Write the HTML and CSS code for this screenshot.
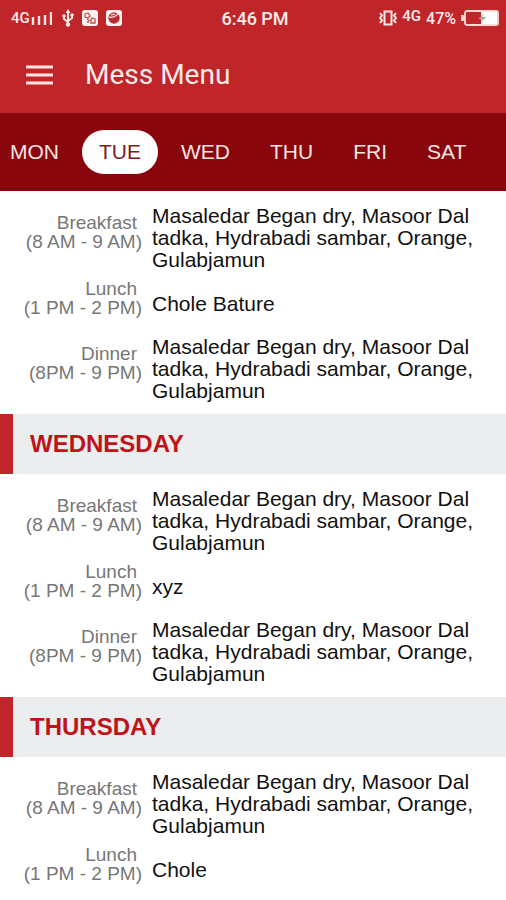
FILE: index.html
```html
<!DOCTYPE html>
<html lang="en">
<head>
<meta charset="utf-8">
<meta name="viewport" content="width=device-width, initial-scale=1">
<title>Mess Menu</title>
<link rel="stylesheet" href="styles.css">
</head>
<body>
<header class="top">
  <div class="status">
    <div class="status-left">
      <span class="carrier">4G</span>
      <svg class="signal" width="22" height="16" viewBox="0 0 22 16" aria-hidden="true"><path d="M3 7v8M9 6v9M15 5v10M21 2v13" stroke="#ffe3e0" stroke-width="2.4"/></svg>
      <svg class="usb" width="12" height="18" viewBox="0 0 12 18" aria-hidden="true"><path d="M6 2v14M2 7v3l4 3M10 6v3l-4 3" fill="none" stroke="#ffe9e6" stroke-width="2"/><path d="M6 0l2.5 4h-5z" fill="#ffe9e6"/><circle cx="2" cy="7" r="1.800" fill="#ffe9e6"/><circle cx="10" cy="6" r="1.800" fill="#ffe9e6"/><circle cx="6" cy="15.500" r="2.200" fill="#ffe9e6"/></svg>
      <svg class="app" width="16" height="16" viewBox="0 0 16 16" aria-hidden="true"><rect width="16" height="16" rx="3" fill="#fff3f1"/><path d="M3 4l3-1 2 3-2 2-3-1zM5 9l3 2M10 8l3 1v4H9v-3zM5 12h2" fill="none" stroke="#c5494b" stroke-width="1.3"/></svg>
      <svg class="app" width="16" height="16" viewBox="0 0 16 16" aria-hidden="true"><rect width="16" height="16" rx="3" fill="#fff3f1"/><circle cx="8" cy="8" r="5.700" fill="#b92c31"/><path d="M3 7c3 1 6 0 9-3M5 5l4-1" fill="none" stroke="#f5c5c2" stroke-width="1.6"/></svg>
    </div>
    <span class="clock">6:46 PM</span>
    <div class="status-right">
      <svg width="18" height="16" viewBox="0 0 18 16" aria-hidden="true"><path d="M5.500 1.500h7v13h-7zM1 3l2 2.500-2 2.500 2 2.500L1 13M17 3l-2 2.500 2 2.500-2 2.500 2 2.500" fill="none" stroke="#ffe9e6" stroke-width="2"/></svg>
      <span class="network">4G</span>
      <span class="percent">47%</span>
      <svg width="38" height="16" viewBox="0 0 38 16" aria-hidden="true"><rect x="4" y="1" width="33" height="14" rx="2" fill="none" stroke="#ffd9d6" stroke-width="1.8"/><path d="M20 2h16v12H20z" fill="#fff"/><path d="M0 5h4v6H0z" fill="#ffd9d6"/><path d="M23 4l-6 5h4l-1 3 5-5h-4z" fill="#a99a94"/></svg>
    </div>
  </div>
  <div class="appbar">
    <button class="menu" aria-label="Open menu"><svg width="27" height="20" viewBox="0 0 27 20" aria-hidden="true"><path d="M0 2h27M0 10h27M0 18h27" stroke="#ffe3e1" stroke-width="3"/></svg></button>
    <h1>Mess Menu</h1>
  </div>
</header>
<nav class="days" aria-label="Days">
  <button>MON</button>
  <button class="active" aria-current="true">TUE</button>
  <button>WED</button>
  <button>THU</button>
  <button>FRI</button>
  <button>SAT</button>
</nav>
<main>
  <section>
    <dl>
      <div class="meal"><dt><span>Breakfast</span>(8 AM - 9 AM)</dt><dd>Masaledar Began dry, Masoor Dal<br>tadka, Hydrabadi sambar, Orange,<br>Gulabjamun</dd></div>
      <div class="meal"><dt><span>Lunch</span>(1 PM - 2 PM)</dt><dd>Chole Bature</dd></div>
      <div class="meal"><dt><span>Dinner</span>(8PM - 9 PM)</dt><dd>Masaledar Began dry, Masoor Dal<br>tadka, Hydrabadi sambar, Orange,<br>Gulabjamun</dd></div>
    </dl>
  </section>
  <section>
    <h2>WEDNESDAY</h2>
    <dl>
      <div class="meal"><dt><span>Breakfast</span>(8 AM - 9 AM)</dt><dd>Masaledar Began dry, Masoor Dal<br>tadka, Hydrabadi sambar, Orange,<br>Gulabjamun</dd></div>
      <div class="meal"><dt><span>Lunch</span>(1 PM - 2 PM)</dt><dd>xyz</dd></div>
      <div class="meal"><dt><span>Dinner</span>(8PM - 9 PM)</dt><dd>Masaledar Began dry, Masoor Dal<br>tadka, Hydrabadi sambar, Orange,<br>Gulabjamun</dd></div>
    </dl>
  </section>
  <section>
    <h2>THURSDAY</h2>
    <dl>
      <div class="meal"><dt><span>Breakfast</span>(8 AM - 9 AM)</dt><dd>Masaledar Began dry, Masoor Dal<br>tadka, Hydrabadi sambar, Orange,<br>Gulabjamun</dd></div>
      <div class="meal"><dt><span>Lunch</span>(1 PM - 2 PM)</dt><dd>Chole</dd></div>
    </dl>
  </section>
</main>
</body>
</html>
```
FILE: styles.css
```css
* { box-sizing: border-box; }
body, h1, h2, dl, dd { margin: 0; }
body {
  background: #fff;
  color: #111;
  font-family: "Liberation Sans", Arial, sans-serif;
}
button {
  border: 0;
  padding: 0;
  background: none;
  color: inherit;
  font: inherit;
}
svg { display: block; flex: none; }
.top { background: #c02529; color: #ffebe9; }
.status {
  display: grid;
  grid-template-columns: 1fr auto 1fr;
  align-items: center;
  height: 36px;
  padding: 0 7px 0 11px;
  font-family: Roboto, sans-serif;
  font-size: 18px;
  font-weight: 500;
}
.status-left, .status-right { display: flex; align-items: center; }
.status-right { justify-content: flex-end; gap: 5px; }
.carrier { font-size: 15px; }
.usb { margin-left: 10px; }
.app { margin-left: 8px; }
.network { font-size: 15px; padding-bottom: 4px; }
.percent { font-size: 16px; }
.appbar {
  display: flex;
  align-items: center;
  gap: 32px;
  height: 77px;
  padding: 0 26px;
}
h1 { font-family: Roboto, sans-serif; font-size: 28px; font-weight: 400; }
.days {
  display: flex;
  gap: 6px;
  align-items: center;
  height: 78px;
  overflow: hidden;
  background: #88060c;
  color: #fbe5e3;
  font-size: 21px;
}
.days button {
  flex: none;
  height: 44px;
  padding: 0 17px;
  border-radius: 22px;
}
.days button:first-child { padding-left: 10px; }
.days .active { background: #fff; color: #7d1a20; }
dl { padding: 14px 0 12px; }
.meal {
  display: grid;
  grid-template-columns: 142px 1fr;
  column-gap: 10px;
  align-items: center;
  min-height: 65px;
}
dt {
  padding-bottom: 12px;
  color: #777;
  font-size: 19px;
  line-height: 19px;
  text-align: right;
  white-space: nowrap;
}
dt span { display: block; padding-right: 5px; }
dd { font-size: 21px; line-height: 22px; white-space: nowrap; }
h2 {
  display: flex;
  align-items: center;
  height: 60px;
  padding-left: 17px;
  border-left: 13px solid #c02529;
  background: #ebedee;
  color: #c01318;
  font-size: 24px;
}
```
